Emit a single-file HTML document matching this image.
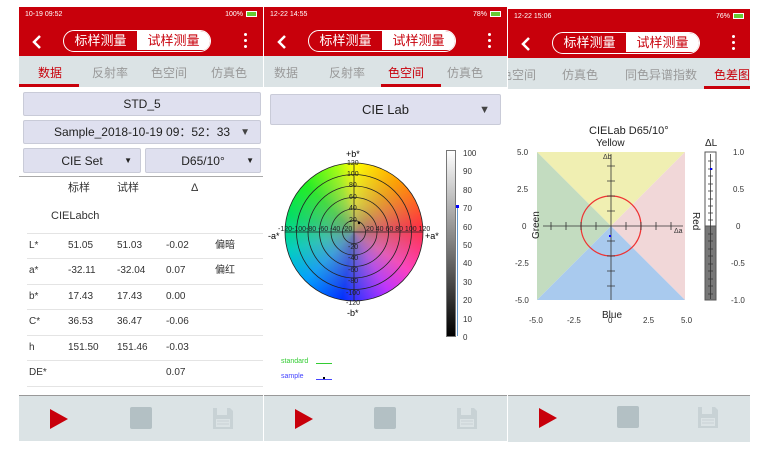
<!DOCTYPE html>
<html><head><meta charset="utf-8"><style>
*{margin:0;padding:0;box-sizing:border-box}
body{width:781px;height:458px;background:#fff;position:relative;overflow:hidden;font-family:"Liberation Sans","Noto Sans CJK SC",sans-serif;color:#222}
.p{position:absolute;top:8px;height:434px;background:#fff;overflow:hidden}
.a{position:absolute;white-space:nowrap}
.hdr{position:absolute;left:0;top:0;right:0;height:49px;background:#c8000b}
.st{position:absolute;top:4px;font-size:7px;color:#fff}
.bat{display:inline-block;width:11px;height:6px;border:1px solid #fff;background:#6c3;vertical-align:-1px;margin-left:3px}
.pill{position:absolute;top:23px;height:22px;width:148px;border:1.5px solid #fff;border-radius:11px;overflow:hidden;font-size:13px}
.pill span{position:absolute;top:0;height:19px;line-height:19px;width:50%;text-align:center}
.tabs{position:absolute;left:0;right:0;top:49px;height:31px;background:#dbe3e5;font-size:12px;color:#999}
.tabs span{position:absolute;top:8px}
.ul{position:absolute;height:3px;top:77px;background:#c8000b}
.box{position:absolute;background:#dfe0ef;border:1px solid #c9cbd8;border-radius:2px;font-size:12px;color:#222;text-align:center}
.bot{position:absolute;left:0;right:0;top:387px;height:47px;background:#dbe3e5;border-top:1px solid #999}
.dots{position:absolute;top:26px;width:3px}
.dots i{display:block;width:3px;height:3px;background:#fff;border-radius:50%;margin-bottom:3px}
.r{position:absolute;left:8px;right:8px;font-size:10px;color:#333;height:12px}
.r span{position:absolute;top:0;line-height:12px}
.ln{position:absolute;left:8px;right:0;height:1px;background:#e4e4e4}
</style></head><body>

<!-- PANEL 1 -->
<div class="p" style="left:19px;width:244px;top:7px">
 <div class="hdr"></div>
 <div class="st" style="left:6px">10-19 09:52</div>
 <div class="st" style="right:6px">100%<span class="bat"></span></div>
 <svg class="a" style="left:12px;top:27px" width="12" height="16"><path d="M9 2 L3 8 L9 14" stroke="#fff" stroke-width="2.5" fill="none"/></svg>
 <div class="pill" style="left:44px"><span style="left:0;color:#fff">标样测量</span><span style="left:50%;background:#fff;color:#c8000b">试样测量</span></div>
 <div class="dots" style="left:225px"><i></i><i></i><i></i></div>
 <div class="tabs"><span style="left:19px;color:#c8000b">数据</span><span style="left:73px">反射率</span><span style="left:132px">色空间</span><span style="left:192px">仿真色</span></div>
 <div class="ul" style="left:0;width:60px"></div>
 <div class="box" style="left:4px;top:85px;width:238px;height:24px;line-height:23px">STD_5</div>
 <div class="box" style="left:4px;top:113px;width:238px;height:24px;line-height:23px">Sample_2018-10-19 09：52：33<span style="position:absolute;right:10px;font-size:10px;color:#444">▼</span></div>
 <div class="box" style="left:4px;top:141px;width:118px;height:25px;line-height:24px">CIE Set<span style="position:absolute;right:8px;font-size:8px">▼</span></div>
 <div class="box" style="left:126px;top:141px;width:116px;height:25px;line-height:24px">D65/10°<span style="position:absolute;right:6px;font-size:8px">▼</span></div>
 <div class="a" style="left:0;right:0;top:169px;height:1px;background:#aaa"></div>
 <div class="r" style="top:175px;font-size:11px"><span style="left:41px">标样</span><span style="left:90px">试样</span><span style="left:164px">Δ</span></div>
 <div class="r" style="top:203px;font-size:11px"><span style="left:24px">CIELabch</span></div>
 <div class="ln" style="top:226px"></div>
 <div class="r" style="top:233px"><span style="left:2px">L*</span><span style="left:41px">51.05</span><span style="left:90px">51.03</span><span style="left:139px">-0.02</span><span style="left:188px">偏暗</span></div>
 <div class="ln" style="top:251px"></div>
 <div class="r" style="top:258px"><span style="left:2px">a*</span><span style="left:41px">-32.11</span><span style="left:90px">-32.04</span><span style="left:139px">0.07</span><span style="left:188px">偏红</span></div>
 <div class="ln" style="top:277px"></div>
 <div class="r" style="top:284px"><span style="left:2px">b*</span><span style="left:41px">17.43</span><span style="left:90px">17.43</span><span style="left:139px">0.00</span></div>
 <div class="ln" style="top:302px"></div>
 <div class="r" style="top:309px"><span style="left:2px">C*</span><span style="left:41px">36.53</span><span style="left:90px">36.47</span><span style="left:139px">-0.06</span></div>
 <div class="ln" style="top:328px"></div>
 <div class="r" style="top:335px"><span style="left:2px">h</span><span style="left:41px">151.50</span><span style="left:90px">151.46</span><span style="left:139px">-0.03</span></div>
 <div class="ln" style="top:353px"></div>
 <div class="r" style="top:360px"><span style="left:2px">DE*</span><span style="left:139px">0.07</span></div>
 <div class="ln" style="top:379px"></div>
 <div class="bot" style="top:388px"></div>
 <svg class="a" style="left:30px;top:401px" width="20" height="22"><path d="M1 1 L19 11 L1 21Z" fill="#c8000b"/></svg>
 <div class="a" style="left:111px;top:400px;width:22px;height:22px;background:#b3c0c4;border-radius:2px"></div>
 <svg class="a" style="left:193px;top:400px" width="22" height="23"><path d="M1 1H18L21 4V22H1Z" fill="#c8d2d5"/><rect x="5" y="1" width="10" height="7" fill="#dbe3e5"/><rect x="4" y="12" width="14" height="8" fill="#dbe3e5"/><path d="M5 14H17M5 17H17" stroke="#c8d2d5"/></svg>
</div>

<!-- PANEL 2 -->
<div class="p" style="left:264px;width:243px;top:7px">
 <div class="hdr"></div>
 <div class="st" style="left:6px">12-22 14:55</div>
 <div class="st" style="right:6px">78%<span class="bat"></span></div>
 <svg class="a" style="left:12px;top:27px" width="12" height="16"><path d="M9 2 L3 8 L9 14" stroke="#fff" stroke-width="2.5" fill="none"/></svg>
 <div class="pill" style="left:44px;top:23px"><span style="left:0;color:#fff">标样测量</span><span style="left:50%;background:#fff;color:#c8000b">试样测量</span></div>
 <div class="dots" style="left:224px"><i></i><i></i><i></i></div>
 <div class="tabs"><span style="left:10px">数据</span><span style="left:65px">反射率</span><span style="left:124px;color:#c8000b">色空间</span><span style="left:183px">仿真色</span></div>
 <div class="ul" style="left:117px;width:60px"></div>
 <div class="box" style="left:6px;top:87px;width:231px;height:31px;line-height:30px;font-size:13px">CIE Lab<span style="position:absolute;right:10px;font-size:11px;color:#444">▼</span></div>
 <div class="a" style="left:21px;top:156px;width:138px;height:138px;border-radius:50%;background:conic-gradient(from 0deg,#ff0 0deg,#ffa000 40deg,#ff3040 85deg,#ff40c0 125deg,#c030ff 150deg,#0030ff 190deg,#00a0ff 225deg,#00d0c0 255deg,#00e060 285deg,#20f020 315deg,#a0ff10 345deg,#ff0 360deg)"></div>
 <div class="a" style="left:21px;top:156px;width:138px;height:138px;border-radius:50%;background:radial-gradient(circle,rgba(140,140,140,0.8) 0%,rgba(160,160,160,0.4) 30%,rgba(160,160,160,0) 70%)"></div>
 <svg class="a" style="left:0;top:131px" width="243" height="200" font-size="7" font-family="Liberation Sans">
  <g fill="none" stroke="#222" stroke-width="0.8">
   <circle cx="90" cy="94" r="69"/><circle cx="90" cy="94" r="57.5"/><circle cx="90" cy="94" r="46"/><circle cx="90" cy="94" r="34.5"/><circle cx="90" cy="94" r="23"/><circle cx="90" cy="94" r="11.5"/>
   <path d="M21 94H159M90 25V163"/>
  </g>
  <circle cx="95" cy="85" r="1.2" fill="#000"/>
  <text x="82" y="19" font-size="9">+b*</text><text x="83" y="178" font-size="9">-b*</text>
  <text x="4" y="101" font-size="9">-a*</text><text x="161" y="101" font-size="9">+a*</text>
  <g fill="#222"><text x="83" y="27">120</text><text x="83" y="38">100</text><text x="85" y="49">80</text><text x="85" y="61">60</text><text x="85" y="72">40</text><text x="85" y="84">20</text>
  <text x="84" y="111">-20</text><text x="84" y="122">-40</text><text x="84" y="134">-60</text><text x="84" y="145">-80</text><text x="82" y="157">-100</text><text x="82" y="167">-120</text>
  <text x="14" y="93">-120-100-80 -60 -40 -20</text><text x="102" y="93">20  40  60  80 100 120</text></g>
 </svg>
 <div class="a" style="left:182px;top:143px;width:10px;height:187px;border:1px solid #777;background:linear-gradient(#fff,#000)"></div>
 <div class="a" style="left:193px;top:199px;width:1px;height:130px;background:#69c"></div>
 <div class="a" style="left:192px;top:198px;width:3px;height:3px;background:#00f"></div>
 <div class="a" style="left:199px;top:138px;font-size:8px;line-height:18.4px;color:#333">100<br>90<br>80<br>70<br>60<br>50<br>40<br>30<br>20<br>10<br>0</div>
 <div class="a" style="left:17px;top:351px;font-size:7px;color:#3c3">standard</div>
 <div class="a" style="left:52px;top:356px;width:16px;height:1px;background:#3c3"></div>
 <div class="a" style="left:17px;top:366px;font-size:7px;color:#44f">sample</div>
 <div class="a" style="left:52px;top:372px;width:16px;height:1px;background:#44f"></div>
 <div class="a" style="left:59px;top:370px;width:2px;height:2px;background:#000"></div>
 <div class="bot" style="top:388px"></div>
 <svg class="a" style="left:30px;top:401px" width="20" height="22"><path d="M1 1 L19 11 L1 21Z" fill="#c8000b"/></svg>
 <div class="a" style="left:110px;top:400px;width:22px;height:22px;background:#b3c0c4;border-radius:2px"></div>
 <svg class="a" style="left:192px;top:400px" width="22" height="23"><path d="M1 1H18L21 4V22H1Z" fill="#c8d2d5"/><rect x="5" y="1" width="10" height="7" fill="#dbe3e5"/><rect x="4" y="12" width="14" height="8" fill="#dbe3e5"/><path d="M5 14H17M5 17H17" stroke="#c8d2d5"/></svg>
</div>

<!-- PANEL 3 -->
<div class="p" style="left:508px;width:242px;top:9px">
 <div class="hdr"></div>
 <div class="st" style="left:6px">12-22 15:06</div>
 <div class="st" style="right:6px">76%<span class="bat"></span></div>
 <svg class="a" style="left:12px;top:27px" width="12" height="16"><path d="M9 2 L3 8 L9 14" stroke="#fff" stroke-width="2.5" fill="none"/></svg>
 <div class="pill" style="left:44px;top:23px"><span style="left:0;color:#fff">标样测量</span><span style="left:50%;background:#fff;color:#c8000b">试样测量</span></div>
 <div class="dots" style="left:224px"><i></i><i></i><i></i></div>
 <div class="tabs" style="top:49px"><span style="left:-8px">色空间</span><span style="left:54px">仿真色</span><span style="left:117px">同色异谱指数</span><span style="left:206px;color:#c8000b">色差图</span></div>
 <div class="ul" style="left:196px;width:50px;top:77px"></div>
 <svg class="a" style="left:0;top:100px" width="242" height="215" font-family="Liberation Sans" font-size="8" fill="#333">
  <text x="81" y="25" font-size="11" fill="#222">CIELab D65/10°</text>
  <text x="88" y="37" font-size="10" fill="#222">Yellow</text>
  <text x="94" y="209" font-size="10" fill="#222">Blue</text>
  <polygon points="29,43 177,43 103,117" fill="#f0efb2"/>
  <polygon points="29,43 103,117 29,191" fill="#c3dcc0"/>
  <polygon points="177,43 103,117 177,191" fill="#f1d7d8"/>
  <polygon points="29,191 103,117 177,191" fill="#a9caee"/>
  <circle cx="103" cy="117" r="30" fill="none" stroke="#e33" stroke-width="1.2"/>
  <g stroke="#333" stroke-width="0.8"><path d="M103 45V191M35 117H175"/>
   <path d="M99 57H107M99 72H107M99 87H107M99 102H107M99 132H107M99 147H107M99 162H107M99 177H107"/>
   <path d="M43 113V121M58 113V121M73 113V121M88 113V121M118 113V121M133 113V121M148 113V121M163 113V121"/>
  </g>
  <text x="95" y="50" font-size="7">Δb</text><text x="166" y="124" font-size="7">Δa</text>
  <rect x="101" y="126" width="2" height="2" fill="#00f"/>
  <text x="9" y="46">5.0</text><text x="9" y="83">2.5</text><text x="14" y="120">0</text><text x="7" y="157">-2.5</text><text x="7" y="194">-5.0</text>
  <text x="21" y="214">-5.0</text><text x="59" y="214">-2.5</text><text x="100" y="214">0</text><text x="135" y="214">2.5</text><text x="173" y="214">5.0</text>
  <text transform="translate(31,130) rotate(-90)" font-size="10" fill="#222">Green</text>
  <text transform="translate(185,103) rotate(90)" font-size="10" fill="#222">Red</text>
  <text x="197" y="37" font-size="10" fill="#222">ΔL</text>
  <rect x="197" y="43" width="11" height="148" fill="#fff" stroke="#555"/>
  <rect x="197" y="117" width="11" height="74" fill="#777" stroke="#555"/>
  <g stroke="#333" stroke-width="0.8"><path d="M202.5 45V190"/><path d="M200 52H205M200 60H205M200 67H205M200 75H205M200 82H205M200 90H205M200 97H205M200 104H205M200 111H205M200 125H205M200 132H205M200 140H205M200 147H205M200 155H205M200 162H205M200 170H205M200 177H205M200 185H205"/></g>
  <rect x="202" y="59" width="2" height="2" fill="#00f"/>
  <text x="225" y="46">1.0</text><text x="225" y="83">0.5</text><text x="228" y="120">0</text><text x="223" y="157">-0.5</text><text x="223" y="194">-1.0</text>
 </svg>
 <div class="bot" style="top:386px"></div>
 <svg class="a" style="left:30px;top:398px" width="20" height="22"><path d="M1 1 L19 11 L1 21Z" fill="#c8000b"/></svg>
 <div class="a" style="left:109px;top:397px;width:22px;height:22px;background:#b3c0c4;border-radius:2px"></div>
 <svg class="a" style="left:189px;top:397px" width="22" height="23"><path d="M1 1H18L21 4V22H1Z" fill="#c8d2d5"/><rect x="5" y="1" width="10" height="7" fill="#dbe3e5"/><rect x="4" y="12" width="14" height="8" fill="#dbe3e5"/><path d="M5 14H17M5 17H17" stroke="#c8d2d5"/></svg>
</div>
</body></html>
